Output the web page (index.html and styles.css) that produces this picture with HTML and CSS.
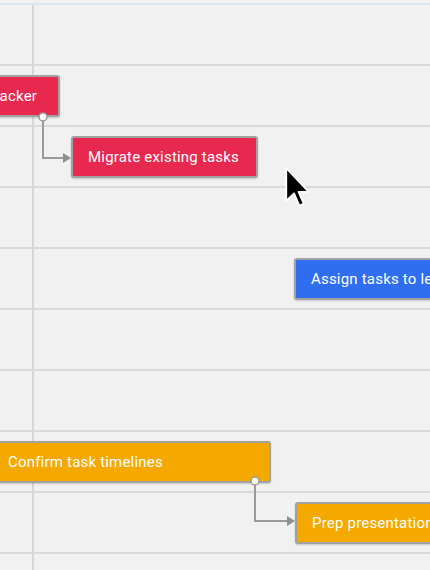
FILE: index.html
```html
<!DOCTYPE html>
<html>
<head>
<meta charset="utf-8">
<link rel="stylesheet" href="styles.css">
</head>
<body>
<div class="chart">
  <div class="top"></div>
  <div class="row"></div>
  <div class="row"><div class="bar red" style="margin-left:-107px;width:167px">Select task tracker</div></div>
  <div class="row"><div class="bar red" style="margin-left:71px;width:187px">Migrate existing tasks</div></div>
  <div class="row"></div>
  <div class="row"><div class="bar blue" style="margin-left:294px;width:200px">Assign tasks to leads</div></div>
  <div class="row"></div>
  <div class="row"></div>
  <div class="row"><div class="bar orange" style="margin-left:-9px;width:280px">Confirm task timelines</div></div>
  <div class="row"><div class="bar orange" style="margin-left:295px;width:200px">Prep presentation</div></div>
  <div class="row"></div>

  <svg class="links" width="430" height="570" viewBox="0 0 430 570">
    <g fill="none" stroke="#9a9a9a" stroke-width="2">
      <path d="M43 118 V158 H64"/>
      <path d="M255 481 V521 H288"/>
    </g>
    <g fill="#8f8f8f">
      <path d="M63 153 L71 158 L63 163 Z"/>
      <path d="M287 516 L295 521 L287 526 Z"/>
    </g>
    <g fill="#fff" stroke="#9a9a9a" stroke-width="1.5">
      <circle cx="43" cy="117" r="4"/>
      <circle cx="255" cy="481" r="4"/>
    </g>
  </svg>

  <svg class="cursor" width="27" height="43" viewBox="0 0 13 21">
    <path d="M1 1 V17 L4.8 13.4 L7.4 19.4 L9.6 18.4 L7 12.6 H12 Z" fill="#000" stroke="#fff" stroke-width="0.9" stroke-linejoin="round"/>
  </svg>
</div>
</body>
</html>
```

FILE: styles.css
```css
html, body {
  margin: 0;
  padding: 0;
}
body {
  background: #f1f1f1;
  font-family: Roboto, "Liberation Sans", Arial, sans-serif;
}
.chart {
  position: relative;
  width: 430px;
  height: 570px;
  overflow: hidden;
  background: linear-gradient(#d6d6d6, #d6d6d6) 32px 0 / 2px 100% no-repeat, #f1f1f1;
}
.top {
  height: 5px;
  box-sizing: border-box;
  border-bottom: 2px solid #dfe5ee;
  background: #f1f1f1;
}
.row {
  height: 61px;
  box-sizing: border-box;
  border-bottom: 2px solid #dadada;
  display: flex;
  align-items: center;
}
.bar {
  flex-shrink: 0;
  height: 42px;
  box-sizing: border-box;
  border: 2px solid #a2a2a2;
  border-radius: 3px;
  padding-left: 15px;
  display: flex;
  align-items: center;
  color: #fff;
  font-size: 15px;
  letter-spacing: 0.2px;
  white-space: nowrap;
  overflow: hidden;
  box-shadow: 0 1px 2px rgba(0,0,0,0.18);
  position: relative;
  z-index: 1;
}
.red { background: #e8294f; }
.blue { background: #2f6ef0; }
.orange { background: #f5a800; }
.links {
  position: absolute;
  left: 0;
  top: 0;
  z-index: 2;
}
.cursor {
  position: absolute;
  left: 284px;
  top: 166px;
  z-index: 3;
}
```
